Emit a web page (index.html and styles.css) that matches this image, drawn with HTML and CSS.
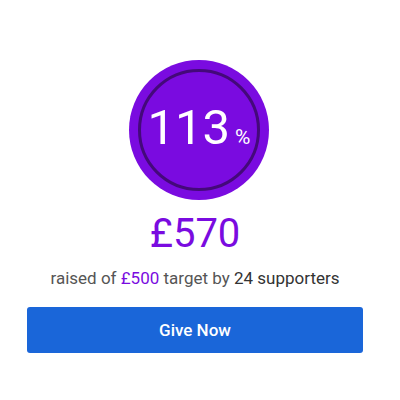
FILE: index.html
```html
<!DOCTYPE html>
<html>
<head>
<meta charset="utf-8">
<link rel="stylesheet" href="styles.css">
</head>
<body>
<div class="card">
  <div class="circle">
    <div class="ring">
      <span class="pct">113</span><span class="sign">%</span>
    </div>
  </div>
  <div class="amount">£570</div>
  <div class="sub">raised of <span class="target">£500</span> target by <span class="count">24 supporters</span></div>
  <button class="give">Give Now</button>
</div>
</body>
</html>
```
FILE: styles.css
```css
html, body {
  margin: 0;
  padding: 0;
  background: #ffffff;
}
body {
  font-family: Roboto, "Noto Sans", sans-serif;
}
.card {
  width: 336px;
  margin-left: 27px;
  padding-top: 60px;
  display: flex;
  flex-direction: column;
  align-items: center;
}
.circle {
  width: 140px;
  height: 140px;
  border-radius: 50%;
  background: #7a0be0;
  display: flex;
  align-items: center;
  justify-content: center;
  margin-left: 8px;
}
.ring {
  width: 122px;
  height: 122px;
  border-radius: 50%;
  border: 3px solid #44097a;
  box-sizing: border-box;
  display: flex;
  align-items: baseline;
  justify-content: center;
  color: #ffffff;
  line-height: 1;
  padding-top: 31px;
}
.pct {
  font-size: 49px;
  font-weight: 400;
}
.sign {
  font-size: 21px;
  margin-left: 5px;
}
.amount {
  margin-top: 14px;
  font-size: 40px;
  line-height: 40px;
  color: #7a0be0;
}
.sub {
  margin-top: 14px;
  font-size: 17px;
  line-height: 20px;
  color: #555555;
}
.target {
  color: #7a0be0;
}
.count {
  color: #333333;
}
.give {
  margin-top: 19px;
  width: 336px;
  height: 46px;
  border: none;
  border-radius: 3px;
  background: #1a66d9;
  color: #ffffff;
  font-family: Roboto, "Noto Sans", sans-serif;
  font-size: 17px;
  font-weight: 500;
}
```
